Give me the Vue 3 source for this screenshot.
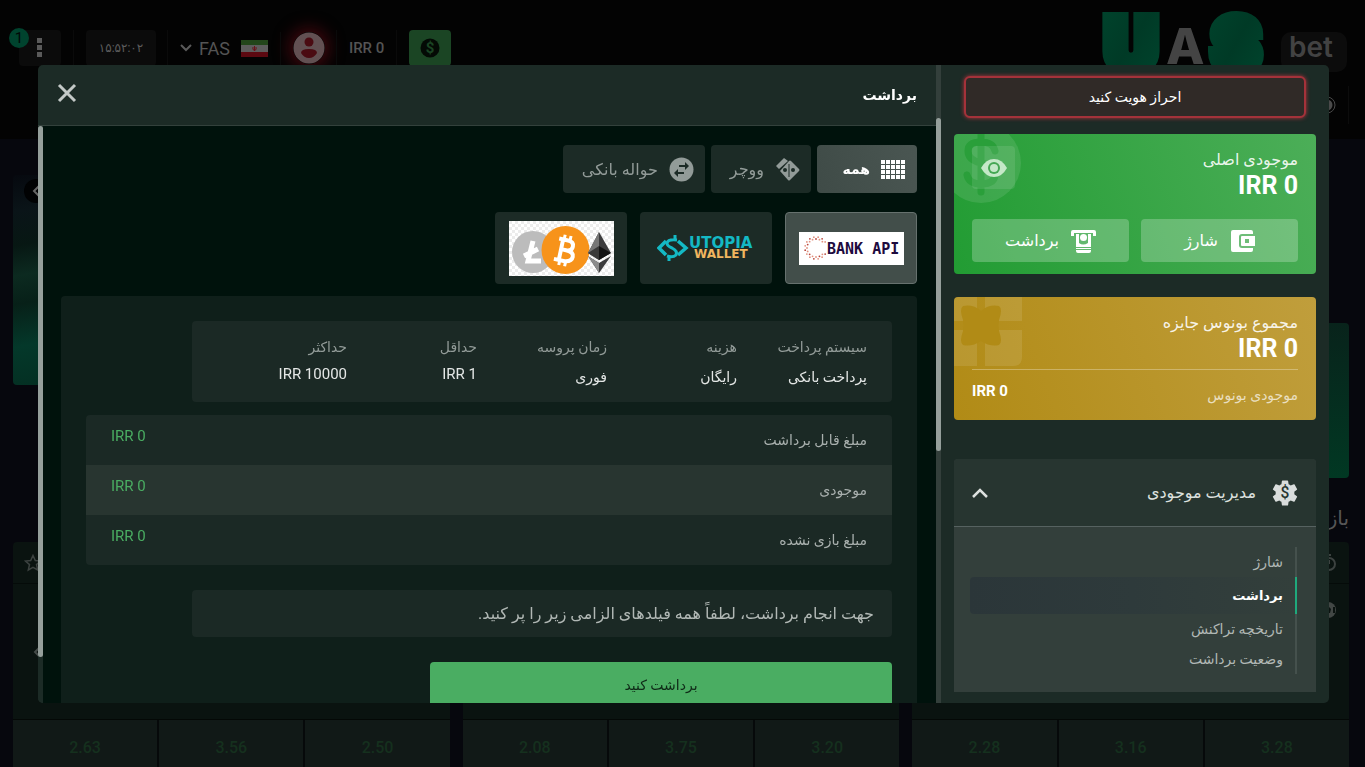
<template>
  <div class="page">

    <!-- ========================= -->
    <!-- SITE BEHIND THE DIALOG -->
    <!-- ========================= -->
    <header class="site-header">
      <div class="site-top">
        <div class="tools">
          <button class="menu-btn" aria-label="منو">
            <span class="menu-badge">1</span>
            <svg width="6" height="20" viewBox="0 0 6 20"><path d="M0 0h5v5H0zM0 7h5v5H0zM0 14h5v5H0z" fill="#5a5a5a" /></svg>
          </button>
          <span class="clock">۱۵:۵۲:۰۲</span>
          <button class="lang">
            <svg width="12" height="8" viewBox="0 0 12 8"><path d="M1 1l5 5 5-5" fill="none" stroke="#5a5a5a" stroke-width="2" /></svg>
            FAS
            <svg width="27" height="17" viewBox="0 0 27 17">
              <rect width="27" height="17" rx="1" fill="#5d5d5d" />
              <path d="M0 0h27v5H0z" fill="#23461b" />
              <path d="M0 12h27v5H0z" fill="#5c0911" />
              <path d="M12 7q-1 3 1.500 3.500Q16 10 15 7M13.500 6v5" fill="none" stroke="#6b1219" />
            </svg>
          </button>
          <button class="avatar" aria-label="حساب">
            <svg width="32" height="32" viewBox="0 0 32 32">
              <circle cx="16" cy="16" r="15.500" fill="#625052" />
              <circle cx="16" cy="10" r="4.500" fill="#4a0b12" />
              <path d="M8 21q0-4 8-4t8 4q-3 5-8 5t-8-5z" fill="#4a0b12" />
            </svg>
          </button>
          <span class="top-balance">IRR 0</span>
          <button class="deposit-btn" aria-label="شارژ">
            <svg width="20" height="20" viewBox="0 0 20 20">
              <circle cx="10" cy="10" r="9.500" fill="#040a05" />
              <text x="10" y="15" text-anchor="middle" class="coin-sign">$</text>
            </svg>
          </button>
        </div>
        <svg class="brand" width="248" height="60" viewBox="0 0 248 60">
          <defs>
            <linearGradient id="brand" x1="0" y1="0" x2="1" y2="1">
              <stop offset="0" stop-color="#00432c" />
              <stop offset=".5" stop-color="#003a26" />
              <stop offset="1" stop-color="#00442d" />
            </linearGradient>
          </defs>
          <rect x="180" y="22" width="66" height="40" rx="10" fill="#0c0c0c" />
          <text x="4" y="60" class="brand-big">U</text>
          <text x="111" y="60" class="brand-big">S</text>
          <text x="65" y="54" class="brand-mid">A</text>
          <text x="188" y="47" class="brand-bet">bet</text>
        </svg>
      </div>
      <div class="site-nav">
        <svg width="18" height="18" viewBox="0 0 18 18"><circle cx="9" cy="9" r="8" fill="none" stroke="#4a4a4a" /><circle cx="9" cy="9" r="5.500" fill="#4a4a4a" /></svg>
      </div>
    </header>

    <main class="site-main">
      <div class="banners">
        <div class="banner banner-left">
          <button class="banner-arrow" aria-label="قبلی">
            <svg width="8" height="12" viewBox="0 0 8 12"><path d="M7 1L2 6l5 5" fill="none" stroke="#666" stroke-width="2" /></svg>
          </button>
        </div>
        <div class="banner banner-right"></div>
      </div>

      <h2 class="games-title">بازی</h2>

      <div class="games">
        <article v-for="(game, i) in games" :key="i" class="game">
          <div class="game-head">
            <svg width="18" height="18" viewBox="0 0 18 18"><path d="M9 1.500l2.300 5 5.200.5-4 3.600 1.200 5.400L9 13.300 4.300 16l1.200-5.400-4-3.600 5.200-.5z" fill="none" stroke="#3c4240" stroke-width="1.500" /></svg>
            <svg width="18" height="18" viewBox="0 0 18 18"><circle cx="9" cy="10" r="6" fill="none" stroke="#3c4240" stroke-width="2" /><path d="M7 1h4M9 6v4" stroke="#3c4240" stroke-width="2" /></svg>
          </div>
          <div class="game-body">
            <svg width="8" height="12" viewBox="0 0 8 12"><path d="M7 1L2 6l5 5" fill="none" stroke="#454b49" stroke-width="2" /></svg>
            <svg class="ball" width="18" height="18" viewBox="0 0 18 18"><circle cx="9" cy="9" r="8" fill="#424745" /><path d="M9 5l3 3-1 4H7L6 8z" fill="#0b1310" /><path d="M15 6v6" stroke="#0b1310" stroke-width="2" /></svg>
          </div>
          <div class="odds">
            <button v-for="odd in game" :key="odd">{{ odd }}</button>
          </div>
        </article>
      </div>
    </main>

    <!-- ========================= -->
    <!-- DIALOG -->
    <!-- ========================= -->
    <div class="overlay">
      <div class="dialog" dir="rtl" role="dialog" aria-label="برداشت">

        <!-- SIDE -->
        <aside class="side">
          <div class="side-content">
            <button class="verify">احراز هویت کنید</button>

            <section class="card main-balance">
              <svg class="card-art" width="68" height="70" viewBox="0 0 68 70">
                <circle cx="27" cy="29" r="40" fill="#fff" fill-opacity=".1" />
                <path d="M27-4v62M41 17q-2-9-14-9-13 0-13 9 0 9 13 12 14 3 14 11 0 10-14 10-12 0-14-9" fill="none" stroke="#2a9f3a" stroke-width="7" stroke-linecap="round" />
              </svg>
              <button class="eye" aria-label="نمایش موجودی">
                <svg width="26" height="18" viewBox="0 0 26 18">
                  <path d="M0 9q5-9 13-9t13 9q-5 9-13 9T0 9z" fill="#c5e8c8" />
                  <circle cx="13" cy="9" r="6" fill="#45a753" />
                  <circle cx="13" cy="9" r="4" fill="#c5e8c8" />
                </svg>
              </button>
              <h3 class="card-title">موجودی اصلی</h3>
              <strong class="card-sum">IRR 0</strong>
              <div class="card-actions">
                <button>
                  <svg width="25" height="24" viewBox="0 0 25 24">
                    <path d="M3 1h18q2 0 2 2v2H12q-3 0-3 3v8q0 3 3 3h11v2q0 2-2 2H3q-2 0-2-2V3q0-2 2-2z" fill="#fff" />
                    <path d="M12 7h13v10H12q-1 0-1-1V8q0-1 1-1zm3 3v4h4v-4z" fill="#fff" fill-rule="evenodd" />
                  </svg>
                  شارژ
                </button>
                <button>
                  <svg width="25" height="24" viewBox="0 0 25 24">
                    <path d="M0 7V3q0-2 2-2h21q2 0 2 2v4h-3V4H3v3z" fill="#fff" />
                    <path d="M5 5h3v9q4 3 9 0V5h3v13H5zM5 19h15v1H5zM5 21h15v1q0 2-2 2H7q-2 0-2-2z" fill="#fff" />
                    <circle cx="12.500" cy="8.500" r="3.500" fill="#fff" />
                  </svg>
                  برداشت
                </button>
              </div>
            </section>

            <section class="card bonus">
              <svg class="card-art" width="68" height="70" viewBox="0 0 68 70">
                <path d="M0 0h23v24H0zM31 0h37v24H31zM0 33h23v36H0zM31 33h37v27q0 9-9 9H31z" fill="#fff" fill-opacity=".1" />
                <path d="M27 14q8-7 18-5 4 3 0 14-1 5 0 11 4 11 0 14-9 2-18-4-9 6-18 4-4-3 0-14 1-6 0-11-4-11 0-14 10-2 18 5z" fill="#b18b16" />
              </svg>
              <h3 class="card-title">مجموع بونوس جایزه</h3>
              <strong class="card-sum">IRR 0</strong>
              <div class="bonus-row">
                <span>موجودی بونوس</span>
                <b>IRR 0</b>
              </div>
            </section>

            <nav class="menu">
              <button class="menu-head">
                <svg width="26" height="26" viewBox="2 2 20 20">
                  <path d="M19.140 12.940c.04-.3.06-.61.06-.94 0-.32-.02-.64-.07-.94l2.030-1.580c.18-.14.23-.41.12-.61l-1.920-3.320c-.12-.22-.37-.29-.59-.22l-2.390.96c-.5-.38-1.030-.7-1.620-.94l-.36-2.540c-.04-.24-.24-.41-.48-.41h-3.840c-.24 0-.43.17-.47.41l-.36 2.540c-.59.24-1.130.57-1.620.94l-2.390-.96c-.22-.08-.47 0-.59.22L2.740 8.870c-.12.21-.08.47.12.61l2.030 1.580c-.05.3-.09.63-.09.94s.02.64.07.94l-2.030 1.580c-.18.14-.23.41-.12.61l1.920 3.320c.12.22.37.29.59.22l2.390-.96c.5.38 1.030.7 1.620.94l.36 2.540c.05.24.24.41.48.41h3.840c.24 0 .44-.17.47-.41l.36-2.540c.59-.24 1.130-.56 1.620-.94l2.390.96c.22.08.47 0 .59-.22l1.920-3.320c.12-.22.07-.47-.12-.61l-2.010-1.580z" fill="#d9dddc" />
                  <text x="12" y="16" text-anchor="middle" class="gear-sign">$</text>
                </svg>
                <span>مدیریت موجودی</span>
                <svg class="chevron" width="16" height="10" viewBox="0 0 16 10"><path d="M1 9l7-7 7 7" fill="none" stroke="#dce0de" stroke-width="2.500" /></svg>
              </button>
              <ul class="menu-list">
                <li v-for="item in menuItems" :key="item" :class="{ active: item === 'برداشت' }">
                  <a href="#">{{ item }}</a>
                </li>
              </ul>
            </nav>
          </div>
          <div class="scroll side-scroll"><i></i></div>
        </aside>

        <!-- WITHDRAW -->
        <section class="withdraw">
          <div class="withdraw-head">
            <h1>برداشت</h1>
            <button class="close" aria-label="بستن">
              <svg width="20" height="20" viewBox="0 0 20 20"><path d="M2 2l16 16M18 2L2 18" stroke="#c3c9c7" stroke-width="3" /></svg>
            </button>
          </div>

          <div class="withdraw-body">
            <div class="withdraw-content">

              <!-- FILTERS -->
              <div class="filters">
                <button class="selected">
                  <svg width="25" height="20" viewBox="0 0 25 20">
                    <template v-for="r in 4" :key="r">
                      <rect v-for="c in 5" :key="c" :x="c * 5 - 5" :y="r * 5 - 4" width="4" height="4" fill="#fff" />
                    </template>
                  </svg>
                  همه
                </button>
                <button>
                  <svg width="25" height="25" viewBox="0 0 25 25">
                    <path d="M1 9L9 1l4 3-9 8zM14 4q1-1 2 0l8 8q1 1 0 2l-9 9q-1 1-2 0l-8-9z" fill="#929b98" />
                    <path d="M14 7v13" stroke="#1c2b26" />
                    <circle cx="10" cy="13" r="2" fill="#1c2b26" />
                    <circle cx="18" cy="13" r="2" fill="#1c2b26" />
                  </svg>
                  ووچر
                </button>
                <button>
                  <svg width="25" height="25" viewBox="0 0 25 25">
                    <circle cx="12.500" cy="12.500" r="12" fill="#929b98" />
                    <path d="M10 8h6V5l4 4-4 4v-3h-6zM15 15H9v-3l-4 4 4 4v-3h6z" fill="#1c2b26" />
                  </svg>
                  حواله بانکی
                </button>
              </div>

              <!-- PAYMENT SYSTEMS -->
              <div class="systems">
                <button class="selected" aria-label="Bank API">
                  <svg width="105" height="33" viewBox="0 0 105 33">
                    <rect width="105" height="33" fill="#fff" />
                    <circle v-for="dot in dots" :key="dot.id" :cx="dot.x" :cy="dot.y" r=".9" :fill="dot.color" />
                    <text x="28" y="22" class="bank-text">BANK API</text>
                  </svg>
                </button>
                <button aria-label="Utopia Wallet">
                  <svg width="98" height="26" viewBox="0 0 98 26">
                    <path d="M9 6L2 13l7 7M21 6l8 7-8 7" fill="none" stroke="#14b9c4" stroke-width="3.500" />
                    <path d="M20 5q-9-1-10 3 0 3 5 5 6 3 4 7-3 3-9 1M18 0v5M12 21v5" fill="none" stroke="#14b9c4" stroke-width="3" />
                    <text x="32" y="13" class="utopia-text">UTOPIA</text>
                    <text x="37" y="23" class="wallet-text">WALLET</text>
                  </svg>
                </button>
                <button aria-label="Crypto">
                  <svg width="105" height="55" viewBox="0 0 105 55">
                    <defs>
                      <pattern id="check" width="6" height="6" patternUnits="userSpaceOnUse">
                        <rect width="6" height="6" fill="#fff" />
                        <path d="M0 0h3v3H0zM3 3h3v3H3z" fill="#ececec" />
                      </pattern>
                    </defs>
                    <rect width="105" height="55" fill="url(#check)" />
                    <circle cx="24" cy="31" r="21" fill="#bcbcbc" />
                    <path d="M24 20l-5 20h13M15 35l14-7" fill="none" stroke="#fff" stroke-width="5" />
                    <circle cx="56.500" cy="29" r="24" fill="#f7931a" />
                    <g transform="rotate(12 56 29)" fill="none" stroke="#fff">
                      <path d="M52 18v22M48 19h9q6 0 6 5t-6 5h-5M57 29q8 0 8 5t-7 6H47" stroke-width="4" />
                      <path d="M53 14v5M59 14v5M53 40v5M59 40v5" stroke-width="3" />
                    </g>
                    <path d="M90 11l12 21-12 7-11-7z" fill="#3c3c3d" />
                    <path d="M90 11v28l-11-7z" fill="#777" />
                    <path d="M90 25v14l12-7z" fill="#141414" />
                    <path d="M90 25v14l-11-7z" fill="#393939" />
                    <path d="M79 35l11 7 12-7-12 17z" fill="#3c3c3d" />
                    <path d="M79 35l11 7v10z" fill="#8c8c8c" />
                  </svg>
                </button>
              </div>

              <!-- DETAILS -->
              <div class="panel">
                <dl class="info">
                  <div v-for="cell in info" :key="cell.label">
                    <dt>{{ cell.label }}</dt>
                    <dd :class="{ latin: cell.latin }">{{ cell.value }}</dd>
                  </div>
                </dl>

                <table class="amounts">
                  <tbody>
                    <tr v-for="row in amounts" :key="row">
                      <th scope="row">{{ row }}</th>
                      <td>IRR 0</td>
                    </tr>
                  </tbody>
                </table>

                <p class="note">جهت انجام برداشت، لطفاً همه فیلدهای الزامی زیر را پر کنید.</p>
                <button class="submit">برداشت کنید</button>
              </div>
            </div>
            <div class="scroll main-scroll"><i></i></div>
          </div>
        </section>

      </div>
    </div>
  </div>
</template>

<script setup>
const games = [
  ['2.63', '3.56', '2.50'],
  ['2.08', '3.75', '3.20'],
  ['2.28', '3.16', '3.28']
]

const menuItems = ['شارژ', 'برداشت', 'تاریخچه تراکنش', 'وضعیت برداشت']

const info = [
  { label: 'سیستم پرداخت', value: 'پرداخت بانکی' },
  { label: 'هزینه', value: 'رایگان' },
  { label: 'زمان پروسه', value: 'فوری' },
  { label: 'حداقل', value: 'IRR 1', latin: true },
  { label: 'حداکثر', value: 'IRR 10000', latin: true }
]

const amounts = ['مبلغ قابل برداشت', 'موجودی', 'مبلغ بازی نشده']

// two rings of dots, open where the name starts
const dots = []
for (let i = 3; i < 30; i++) {
  const angle = (i * Math.PI) / 16
  const radius = i % 2 ? 11 : 9
  dots.push({
    id: i,
    x: 17 + radius * Math.cos(angle),
    y: 16 + radius * Math.sin(angle),
    color: i % 3 ? '#e2917f' : '#b8463c'
  })
}
</script>

<style>
body {
  background: #06070d;
}
</style>

<style scoped>
.page {
  height: 100vh;
  overflow: hidden;
  font-family: Roboto, "DejaVu Sans", sans-serif;
  color: #fff;
}

button {
  border: none;
  background: none;
  color: inherit;
  font: inherit;
  padding: 0;
  cursor: pointer;
}

h1, h2, h3, p, dl, dd, ul {
  margin: 0;
  padding: 0;
  font-weight: 400;
}

svg {
  display: block;
  flex: none;
  direction: ltr;
}

/* ========================
   SITE HEADER
======================== */
.site-header {
  height: 139px;
  background: #030303;
}
.site-top {
  display: flex;
  justify-content: space-between;
  padding: 10px 16px 0 19px;
}
.tools {
  display: flex;
  align-items: center;
  height: 36px;
  padding-top: 20px;
}
.tools > * + * {
  position: relative;
}
.tools > * + *::before {
  content: "";
  position: absolute;
  left: -13px;
  top: 0;
  width: 1px;
  height: 36px;
  background: #0a0a0a;
}
.menu-btn {
  position: relative;
  display: flex;
  align-items: center;
  justify-content: center;
  width: 42px;
  height: 36px;
  border-radius: 4px;
  background: #0b0b0b;
}
.menu-badge {
  position: absolute;
  left: -10px;
  top: -2px;
  width: 20px;
  height: 20px;
  border-radius: 50%;
  background: #00432e;
  color: #020806;
  font-size: 15px;
  line-height: 20px;
}
.clock {
  width: 70px;
  height: 36px;
  margin-left: 25px;
  border-radius: 4px;
  background: #0b0b0b;
  color: #5c5c5c;
  font-size: 12px;
  line-height: 36px;
  text-align: center;
}
.lang {
  display: flex;
  align-items: center;
  gap: 7px;
  height: 36px;
  margin-left: 24px;
  color: #545454;
  font-size: 18px;
}
.lang svg:last-child {
  margin-left: 4px;
}
.avatar {
  margin-left: 25px;
  border-radius: 50%;
  box-shadow: 0 0 16px 4px #40070d;
}
.top-balance {
  margin-left: 24px;
  color: #545454;
  font-size: 15px;
  font-weight: 500;
  line-height: 36px;
}
.deposit-btn {
  display: flex;
  align-items: center;
  justify-content: center;
  width: 42px;
  height: 36px;
  margin-left: 25px;
  border-radius: 4px;
  background: #1b4524;
}
.coin-sign {
  font: 700 15px Roboto, sans-serif;
  fill: #1b4524;
}
.brand {
  overflow: visible;
}
.brand-big {
  font: 900 72px Inter, "DejaVu Sans", sans-serif;
  fill: url(#brand);
  stroke: url(#brand);
  stroke-width: 12px;
}
.brand-mid {
  font: 800 50px Inter, "DejaVu Sans", sans-serif;
  fill: #444;
}
.brand-bet {
  font: 600 28px Inter, sans-serif;
  fill: #424242;
}
.site-nav {
  display: flex;
  justify-content: flex-end;
  align-items: center;
  height: 38px;
  margin: 16px 16px 0;
  padding-right: 12px;
  border-right: 1px solid #0c0c0c;
}

/* ========================
   SITE CONTENT
======================== */
.site-main {
  padding: 36px 16px 0 13px;
}
.banners {
  display: flex;
  justify-content: space-between;
  align-items: flex-end;
  height: 303px;
}
.banner {
  width: 40%;
  border-radius: 4px;
}
.banner-left {
  align-self: flex-start;
  height: 210px;
  background: linear-gradient(170deg, #06090f 0, #0a1418 36px, #071713 70px, #0c2a20 100px, #072018 128px, #04382a 170px, #043023 210px);
}
.banner-right {
  height: 155px;
  background: linear-gradient(#08231b, #013823);
}
.banner-arrow {
  display: flex;
  align-items: center;
  justify-content: center;
  width: 24px;
  height: 24px;
  margin: 4px 0 0 11px;
  border-radius: 50%;
  background: #010203;
}
.games-title {
  height: 64px;
  color: #565656;
  font-size: 20px;
  line-height: 80px;
  text-align: right;
}
.games {
  display: grid;
  grid-template-columns: repeat(3, 1fr);
  gap: 13px;
}
.game {
  border-radius: 4px 4px 0 0;
  background: #0a1310;
}
.game-head {
  display: flex;
  justify-content: space-between;
  align-items: center;
  height: 41px;
  padding: 0 11px;
  border-bottom: 1px solid #050b09;
}
.game-body {
  display: flex;
  justify-content: space-between;
  align-items: center;
  height: 135px;
  padding: 0 12px 0 20px;
  border-bottom: 1px solid #040806;
}
.ball {
  margin-bottom: 84px;
}
.odds {
  display: grid;
  grid-template-columns: repeat(3, 1fr);
  gap: 2px;
  background: #06090a;
}
.odds button {
  height: 54px;
  background: #111917;
  color: #15301e;
  font-size: 16px;
  font-weight: 500;
}

/* ========================
   DIALOG
======================== */
.overlay {
  position: fixed;
  inset: 0;
  display: flex;
  padding: 65px 36px 64px 38px;
}
.dialog {
  display: flex;
  flex: 1;
  min-width: 0;
  border-radius: 5px;
  background: #1c2b26;
  overflow: hidden;
}
.scroll {
  flex: none;
  width: 5px;
  background: #333f3b;
}
.scroll i {
  display: block;
  border-radius: 3px;
  background: #959f9b;
}

/* ========================
   SIDE
======================== */
.side {
  display: flex;
  flex: none;
  width: 393px;
}
.side-content {
  flex: 1;
  padding: 11px 13px;
}
.side-scroll i {
  height: 333px;
  margin-top: 53px;
}
.verify {
  display: block;
  width: calc(100% - 20px);
  height: 42px;
  margin: 0 10px 16px;
  border: 2px solid #a4323a;
  border-radius: 6px;
  background: #302a27;
  box-shadow: 0 0 4px #b5333d;
  font-size: 14px;
  font-weight: 500;
}
.card {
  position: relative;
  padding: 12px 18px;
  border-radius: 4px;
  overflow: hidden;
}
.card-art {
  position: absolute;
  left: 0;
  top: 0;
}
.card-title {
  position: relative;
  color: rgba(255, 255, 255, 0.9);
  font-size: 16px;
  line-height: 28px;
}
.card-sum {
  display: block;
  font-size: 25px;
  line-height: 24px;
}
.main-balance {
  background: linear-gradient(250deg, #4cae58, #229c33);
}
.eye {
  position: absolute;
  left: 18px;
  top: 12px;
  display: flex;
  align-items: center;
  justify-content: center;
  width: 43px;
  height: 43px;
  border-radius: 4px;
  background: rgba(255, 255, 255, 0.1);
}
.card-actions {
  display: grid;
  grid-template-columns: 1fr 1fr;
  gap: 12px;
  margin-top: 21px;
}
.card-actions button {
  display: flex;
  align-items: center;
  justify-content: center;
  gap: 12px;
  height: 43px;
  border-radius: 4px;
  background: rgba(255, 255, 255, 0.24);
  font-size: 16px;
}
.bonus {
  height: 99px;
  margin-top: 23px;
  background: linear-gradient(250deg, #c09e3c, #b18b16);
}
.bonus-row {
  display: flex;
  justify-content: space-between;
  margin-top: 8px;
  border-top: 1px solid rgba(255, 255, 255, 0.3);
  font-size: 15px;
  line-height: 42px;
}
.bonus-row span {
  padding-top: 4px;
  color: rgba(255, 255, 255, 0.7);
  font-size: 14px;
}

/* ========================
   SIDE MENU
======================== */
.menu {
  margin-top: 39px;
  border-radius: 4px 4px 0 0;
  background: #333f3b;
  overflow: hidden;
}
.menu-head {
  display: flex;
  align-items: center;
  gap: 16px;
  width: 100%;
  height: 68px;
  padding: 0 18px;
  border-bottom: 1px solid #566260;
  background: #273530;
  color: #dce0de;
  font-size: 16px;
}
.gear-sign {
  font: 500 12px Roboto, sans-serif;
  fill: #273530;
}
.chevron {
  margin-right: auto;
}
.menu-list {
  margin: 20px 19px 18px 16px;
  list-style: none;
  font-size: 14px;
}
.menu-list li {
  height: 30px;
  padding-right: 12px;
  border-right: 2px solid #45514d;
  line-height: 30px;
}
.menu-list li.active {
  height: 37px;
  border-color: #1fa97c;
  border-radius: 4px 0 0 4px;
  background: linear-gradient(to right, #2b3639, #2e3a3b 50%, #333f3b);
  line-height: 37px;
}
.menu-list a {
  color: #b1b8b5;
  text-decoration: none;
}
.menu-list .active a {
  color: #fff;
  font-size: 13px;
  font-weight: 700;
}

/* ========================
   WITHDRAW
======================== */
.withdraw {
  display: flex;
  flex: 1;
  flex-direction: column;
  min-width: 0;
}
.withdraw-head {
  display: flex;
  justify-content: space-between;
  align-items: center;
  height: 60px;
  flex: none;
  padding: 0 19px;
  border-bottom: 1px solid #33413c;
}
.withdraw-head h1 {
  font-size: 14px;
  font-weight: 700;
}
.close {
  padding-bottom: 4px;
}
.withdraw-body {
  display: flex;
  flex: 1;
  min-height: 0;
  background: #00120c;
}
.withdraw-content {
  flex: 1;
  min-width: 0;
  padding: 19px 19px 0 18px;
  overflow: hidden;
}
.main-scroll {
  background: #1c2b26;
}
.main-scroll i {
  height: 92%;
}

/* ========================
   FILTERS
======================== */
.filters {
  display: flex;
  gap: 6px;
}
.filters button {
  display: flex;
  align-items: center;
  gap: 11px;
  height: 48px;
  min-width: 100px;
  padding: 0 11px 0 19px;
  border-radius: 4px;
  background: #1c2b26;
  color: #929b98;
  font-size: 16px;
}
.filters .selected {
  background: linear-gradient(250deg, #4a5652, #3f4b47);
  color: #fff;
  font-size: 14px;
  font-weight: 700;
}
.systems {
  display: flex;
  gap: 13px;
  margin-top: 19px;
}
.systems button {
  display: flex;
  align-items: center;
  justify-content: center;
  width: 132px;
  height: 72px;
  border-radius: 4px;
  background: #1c2b26;
}
.systems .selected {
  border: 1px solid #66716e;
  background: #424e4a;
}
.bank-text {
  font: 700 15px "DejaVu Sans Mono", monospace;
  fill: #1e0b3e;
}
.utopia-text {
  font: 700 15px "DejaVu Sans", sans-serif;
  fill: #14b9c4;
}
.wallet-text {
  font: 700 12px "DejaVu Sans", sans-serif;
  fill: #f0b55f;
}

/* ========================
   DETAILS
======================== */
.panel {
  margin-top: 12px;
  padding: 25px;
  border-radius: 4px;
  background: #0f1f1a;
}
.info {
  display: grid;
  grid-template-columns: repeat(5, 1fr);
  max-width: 650px;
  height: 57px;
  padding: 12px 25px;
  border-radius: 4px;
  background: #1b2925;
}
.info dt {
  color: #929b98;
  font-size: 14px;
  line-height: 28px;
}
.info dd {
  color: #e4e7e6;
  font-size: 14px;
  line-height: 32px;
}
.info .latin {
  font-size: 15px;
  line-height: 26px;
}
.amounts {
  width: 100%;
  margin-top: 13px;
  border-collapse: collapse;
  border-radius: 4px;
  background: #1b2925;
  overflow: hidden;
}
.amounts tr:nth-child(2) {
  background: #283530;
}
.amounts th,
.amounts td {
  height: 42px;
  padding: 0 25px 8px;
}
.amounts th {
  height: 50px;
  padding: 0 25px;
  color: #a9b0ae;
  font-size: 14px;
  font-weight: 400;
  text-align: right;
}
.amounts td {
  color: #4aad62;
  font-size: 15px;
  text-align: left;
}
.note {
  max-width: 664px;
  margin-top: 25px;
  padding: 0 18px;
  border-radius: 4px;
  background: #1b2925;
  color: #b1b8b5;
  font-size: 16px;
  line-height: 47px;
}
.submit {
  display: block;
  width: 462px;
  height: 46px;
  margin-top: 25px;
  border-radius: 4px;
  background: #4aad62;
  color: #0f2a17;
  font-size: 14px;
}
</style>
